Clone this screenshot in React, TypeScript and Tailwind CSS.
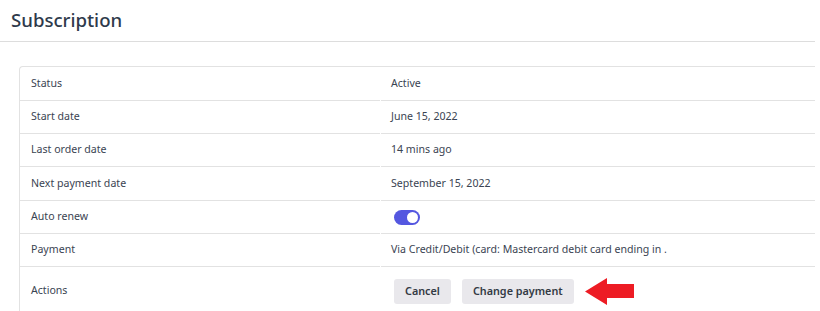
const rows: { label: string; value: React.ReactNode; h: string }[] = [
  { label: "Status", value: "Active", h: "h-[34px]" },
  { label: "Start date", value: "June 15, 2022", h: "h-[33px]" },
  { label: "Last order date", value: "14 mins ago", h: "h-[33px]" },
  { label: "Next payment date", value: "September 15, 2022", h: "h-[34px]" },
  {
    label: "Auto renew",
    h: "h-[33px]",
    value: (
      <span className="relative inline-flex h-[15px] w-[26px] items-center rounded-full bg-[#5457e0] mt-[1px] ml-[3px]">
        <span className="absolute right-[2px] h-[11px] w-[11px] rounded-full bg-white" />
      </span>
    ),
  },
  { label: "Payment", value: "Via Credit/Debit (card: Mastercard debit card ending in .", h: "h-[33px]" },
];

export default function App() {
  return (
    <div className="w-[820px] h-[311px] overflow-hidden bg-white text-[#3a4452] font-['Noto_Sans','Open_Sans',sans-serif]">
      <div className="w-[815px]">
        <div className="h-[42px] border-b border-[#dddddd] px-[11px] pt-[7px]">
          <h1 className="text-[18.6px] leading-[26px] font-medium text-[#2e3a4b]">Subscription</h1>
        </div>
        <div className="ml-[19px] mt-[24px] border-l border-t border-[#e2e2e2] rounded-tl-[4px] text-[10.6px]">
          {rows.map((r) => (
            <div key={r.label} className={`flex ${r.h}`}>
              <div className="w-[360px] border-b border-[#e2e2e2] pl-[11px] flex items-center">{r.label}</div>
              <div className="ml-px flex-1 border-b border-[#e2e2e2] pl-[10px] flex items-center">{r.value}</div>
            </div>
          ))}
          <div className="flex h-[48px]">
            <div className="w-[360px] pl-[11px] flex items-center">Actions</div>
            <div className="ml-px flex-1 pl-[13px] flex items-center gap-[11px]">
              <button className="h-[25px] px-[11px] rounded-[3px] bg-[#e9e8ec] text-[10.8px] font-semibold text-[#333a44]">Cancel</button>
              <button className="h-[25px] px-[11px] rounded-[3px] bg-[#e9e8ec] text-[10.8px] font-semibold text-[#333a44]">Change payment</button>
              <svg width="49" height="27" viewBox="0 0 49 27">
                <polygon points="0,13.5 22,0 22,6 49,6 49,20 22,20 22,27" fill="#ed1c24" />
              </svg>
            </div>
          </div>
        </div>
      </div>
    </div>
  );
}
